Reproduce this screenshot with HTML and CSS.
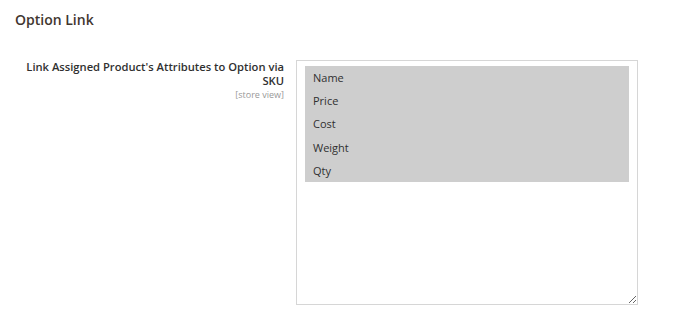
FILE: index.html
```html
<!DOCTYPE html>
<html lang="en">
<head>
  <meta charset="UTF-8">
  <title>Option Link</title>
  <link rel="stylesheet" href="styles.css">
</head>
<body>

  <div class="section">
    <h3 class="section-title">Option Link</h3>

    <div class="field">
      <div class="field-label">
        <label for="link-attrs">Link Assigned Product's Attributes to Option via SKU</label>
        <span class="scope">[store view]</span>
      </div>
      <div class="field-control">
        <div class="multiselect" id="link-attrs">
          <div class="option selected">Name</div>
          <div class="option selected">Price</div>
          <div class="option selected">Cost</div>
          <div class="option selected">Weight</div>
          <div class="option selected">Qty</div>
        </div>
      </div>
    </div>
  </div>

</body>
</html>
```

FILE: styles.css
```css
body {
  margin: 0;
  font-family: 'Open Sans', sans-serif;
  background: #fff;
  color: #303030;
}

.section {
  padding: 10px 15px;
}

.section-title {
  margin: 0;
  font-size: 14px;
  font-weight: 600;
  line-height: 19px;
  color: #41362f;
}

.field {
  display: flex;
  margin-top: 31px;
}

.field-label {
  width: 264px;
  padding-left: 5px;
  text-align: right;
}

.field-label label {
  display: block;
  font-size: 11.2px;
  font-weight: 600;
  line-height: 14px;
  color: #303030;
}

.scope {
  display: block;
  margin-top: 1px;
  font-size: 9px;
  line-height: 12px;
  color: #999;
}

.field-control {
  margin-left: 12px;
}

.multiselect {
  box-sizing: border-box;
  width: 342px;
  height: 245px;
  padding: 5px 8px;
  border: 1px solid #d6d6d6;
  overflow: auto;
  resize: both;
}

.option {
  height: 23.2px;
  padding-left: 8px;
  font-size: 11px;
  line-height: 23px;
  color: #303030;
}

.option.selected {
  background: #cecece;
}
```
